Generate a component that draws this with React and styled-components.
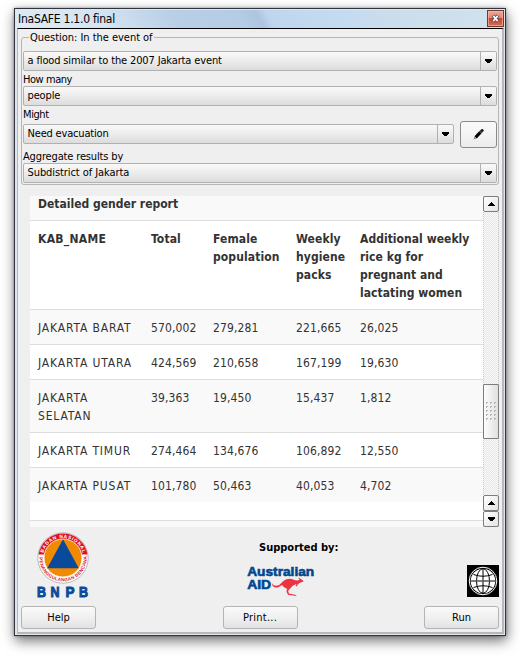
import React from "react";
import styled, { createGlobalStyle } from "styled-components";

const Global = createGlobalStyle`
  *, *::before, *::after { box-sizing: border-box; }
  body { margin: 0; background: #fff; overflow: hidden; }
`;

const Page = styled.div`
  width: 520px;
  height: 656px;
  padding: 8px 14px 20px;
  font: 11px/14px "DejaVu Sans Condensed", "DejaVu Sans", sans-serif;
  font-stretch: condensed;
  color: #000;
`;

const Window = styled.div`
  width: 492px;
  height: 628px;
  display: flex;
  flex-direction: column;
  border: 1px solid #30343c;
  background: #dfe6ee;
  padding: 1px;
  box-shadow: 1px 5px 12px 0 rgba(0, 0, 0, 0.55), 0 0 3px rgba(0, 0, 0, 0.35);
`;

const TitleBar = styled.div`
  height: 18px;
  flex: none;
  display: flex;
  justify-content: space-between;
  padding-left: 2px;
  background: linear-gradient(60deg, #dfe9f3 0, #d5e4f2 18%, #b9cfe6 33%, #b5cce5 46%, #adc5df 50%, #bfd6ee 52%, #c5dbf1 68%, #cbddeb 76%, #d2e2ee 100%);
`;

const Text = styled.span`
  display: block;
  white-space: nowrap;
  letter-spacing: ${(p) => p.$ls || 0}px;
  font-size: ${(p) => p.$size || 11}px;
  font-weight: ${(p) => (p.$bold ? 700 : 400)};
`;

const Title = styled(Text)`
  line-height: 18px;
`;

const CloseButton = styled.div`
  width: 17px;
  height: 17px;
  border: 1px solid #6b3a37;
  background: linear-gradient(#f0a795 0, #e08570 45%, #c64a30 50%, #d96a4c 100%);
  box-shadow: inset 0 0 0 1px rgba(255, 190, 170, 0.6);
  display: flex;
  align-items: center;
  justify-content: center;
`;

const Body = styled.div`
  flex: 1;
  margin-left: 1px;
  border: solid #bab7b9;
  border-width: 1px 2px 2px 1px;
  border-top-color: #000;
  background: #efefef;
  padding: 0 3px 0 3px;
  display: flex;
  flex-direction: column;
`;

const Group = styled.fieldset`
  margin: 1px 0 0;
  padding: 0 1px;
  height: 155px;
  min-width: 0;
  border: 1px solid #b5b5b5;
  border-radius: 3px;
  display: block;
`;

const Legend = styled.legend`
  margin-left: 6px;
  padding: 1px 1px 0;
  height: 14px;
`;

const Combo = styled.div`
  width: ${(p) => p.$w || 474}px;
  height: 20px;
  display: flex;
  align-items: stretch;
  justify-content: space-between;
  border: 1px solid #b1b1b1;
  border-radius: 2px;
  background: linear-gradient(#f9f9f9, #ececec 50%, #dcdcdc);
  padding-left: 3.5px;
`;

const ComboText = styled(Text)`
  line-height: 18px;
`;

const ComboArrow = styled.span`
  width: 16px;
  border-left: 1px solid #b1b1b1;
  display: flex;
  align-items: center;
  justify-content: center;
`;

const FieldLabel = styled(Text)`
  height: ${(p) => p.$h}px;
  line-height: 14px;
  padding-top: ${(p) => p.$top || 0}px;
`;

const FieldRow = styled.div`
  display: flex;
  align-items: center;
  justify-content: space-between;
  height: 26px;
  margin-top: -3px;
  margin-bottom: 1px;
`;

const IconButton = styled.div`
  width: 37px;
  height: 27px;
  border: 1px solid #8b8b8b;
  border-radius: 3px;
  background: linear-gradient(#fafafa, #ececec);
  display: flex;
  align-items: center;
  justify-content: center;
`;

const Report = styled.div`
  display: flex;
  height: 331px;
  margin: 11px 0 0 9px;
`;

const ReportView = styled.div`
  width: 453px;
  background: #fff;
  overflow: hidden;
`;

const Table = styled.table`
  width: 453px;
  table-layout: fixed;
  border-collapse: separate;
  border-spacing: 0;
  color: #333;
  font-size: 12px;
  line-height: 18px;
`;

const Col = styled.col`
  width: ${(p) => p.$w}px;
`;

const Row = styled.tr`
  background: ${(p) => (p.$odd ? "#f9f9f9" : "#fff")};
`;

const Cell = styled.td`
  padding: 9px 0 7px 8px;
  border-top: 1px solid #ddd;
  vertical-align: top;
  text-align: left;
`;

const Caption = styled.div`
  height: 24px;
  padding: 0 8px;
  background: #f9f9f9;
  color: #333;
  line-height: 16px;
`;

const NextTable = styled.div`
  margin-top: 18px;
  height: 7px;
  border-top: 1px solid #ddd;
  background: #f9f9f9;
`;

const ScrollBar = styled.div`
  width: 16px;
  display: flex;
  flex-direction: column;
  border: dotted #c9c9c9;
  border-width: 0 1px;
  background: repeating-conic-gradient(#e6e6e6 0 25%, #fafafa 0 50%) 0 0 / 2px 2px;
`;

const ScrollTrack = styled.div`
  height: ${(p) => p.$h}px;
`;

const ScrollButton = styled.div`
  width: 16px;
  margin-left: -1px;
  height: 16px;
  border: 1px solid #7d7d7d;
  border-radius: 2px;
  background: linear-gradient(135deg, #fff, #e3e3e3);
  display: flex;
  align-items: center;
  justify-content: center;
`;

const ScrollHandle = styled(ScrollButton)`
  height: 55px;
  border-radius: 1px;
  background: linear-gradient(90deg, #fdfdfd, #e0e0e0);
`;

const Sponsors = styled.div`
  height: 79px;
  display: flex;
  align-items: flex-end;
  padding: 0 0 9px 15px;
`;

const Support = styled.div`
  width: 110px;
  height: 56px;
  margin: 0 auto 0 169px;
  display: flex;
  flex-direction: column;
`;

const SupportLogo = styled.svg`
  margin: 9px 0 0 -13px;
`;

const Buttons = styled.div`
  display: flex;
  justify-content: space-between;
`;

const PushButton = styled.div`
  width: 75px;
  height: 23px;
  padding-top: 1px;
  border: 1px solid #b4b4b4;
  border-radius: 3px;
  background: linear-gradient(#fafafa, #f0f0f0 50%, #e2e2e2);
  display: flex;
  align-items: center;
  justify-content: center;
`;

const Arrow = ({ up }) => (
  <svg width="7" height="4" viewBox="0 0 7 4" shapeRendering="crispEdges">
    {up ? (
      <path d="M3 0h1v1h1v1h1v1h1v1H0V3h1V2h1V1h1z" />
    ) : (
      <path d="M0 0h7v2H6v1H5v1H2V3H1V2H0z" />
    )}
  </svg>
);

const Pencil = () => (
  <svg width="11" height="11" viewBox="0 0 11 11">
    <path d="M2.6 8.4 7.3 3.4" stroke="#000" strokeWidth="3" />
    <path d="M7.9 2.8 9.2 1.5" stroke="#222" strokeWidth="3" strokeLinecap="round" />
    <path d="M.4 10.6 1.4 7.6 3.5 9.5z" fill="#888" />
    <path d="M6.6 2.2 9 4.5" stroke="#999" strokeWidth=".6" />
  </svg>
);

const Grip = () => (
  <svg width="11" height="20" viewBox="0 0 11 20" shapeRendering="crispEdges">
    {[0, 4, 8, 12, 16].flatMap((y) =>
      [0, 4, 8].map((x) => (
        <path key={`${x}-${y}`} d={`M${x} ${y}h2v1h-1v1h-1z`} fill="#b4b4b4" />
      ))
    )}
  </svg>
);

const BnpbLogo = () => (
  <svg width="54" height="66" viewBox="0 0 54 66" overflow="visible">
    <defs>
      <path id="ringTop" d="M6.500 27.500 A20.500 20.500 0 1 1 47.500 27.500" />
      <path id="ringBottom" d="M3.400 23.500 A23.800 23.800 0 1 0 50.600 23.500" />
    </defs>
    <circle cx="27" cy="27" r="25.200" fill="#fff" stroke="#aaa" strokeWidth=".8" />
    <path d="M2.500 23.500 A24.800 24.800 0 0 1 51.500 23.500 H27z" fill="#e2121f" />
    <circle cx="27" cy="27" r="19" fill="#f08a00" stroke="#fff" strokeWidth=".8" />
    <path d="M27 8.300 42.800 37.300H11.200z" fill="#0a4a9c" />
    <text fontFamily="Liberation Sans" fontWeight="700" fontSize="4.800" fill="#fff">
      <textPath href="#ringTop" startOffset="5.500" textLength="53">BADAN NASIONAL</textPath>
    </text>
    <text fontFamily="Liberation Sans" fontWeight="700" fontSize="4.600" fill="#e2121f">
      <textPath href="#ringBottom" startOffset="3" textLength="76">PENANGGULANGAN BENCANA</textPath>
    </text>
    <g fontFamily="Liberation Sans" fontWeight="700" fontSize="15" fill="#0a4a9c" stroke="#0a4a9c" strokeWidth="1">
      {["B", "N", "P", "B"].map((c, i) => (
        <text key={i} x={[0.9, 14.6, 29.4, 43.1][i]} y="65.500" textLength="9" lengthAdjust="spacingAndGlyphs">{c}</text>
      ))}
    </g>
  </svg>
);

const AusAid = () => (
  <SupportLogo width="70" height="33" viewBox="0 0 70 33">
    <g fontFamily="Liberation Sans" fontWeight="700" fontSize="13" fill="#00478f" stroke="#00478f" strokeWidth=".6">
      <text x="1.200" y="12" textLength="67" lengthAdjust="spacingAndGlyphs">Australian</text>
      <text x="1.200" y="24.700" textLength="24" lengthAdjust="spacingAndGlyphs">AID</text>
    </g>
    <path fill="#ee3340" d="M26 19.2c1.5 3 5 3 7.500 1.500c3-2.500 5-6 10-6c3.500 0 5.500 2 8 1.800l2-.7-1.200-2.500 2.200 1.500 2.200 1.500 1 1.200-2.500.8c-1.500.5-2 1.200-3 1.700l-1.500 2.500-1-.4.8-2c-2 .6-2.700 1.400-4.300 2.200l-1.500 1.600c-1.500 1.500-2.800 3-2.500 3.600l.8 2 7 1.600.5.900-8.500-1.300-1.500-3 .5-3-3-1.500-2-2.200c-2 1.500-3.500 2.600-5.500 2.600c-2.200 0-4-1.200-4.500-3.400z" />
  </SupportLogo>
);

const Globe = () => (
  <svg width="32" height="32" viewBox="0 0 32 32">
    <rect width="32" height="32" fill="#000" />
    <circle cx="16" cy="16" r="13.800" fill="none" stroke="#fff" strokeWidth="1" />
    <circle cx="16" cy="16" r="12.300" fill="#fff" />
    <g fill="none" stroke="#000" strokeWidth="1">
      <ellipse cx="16" cy="16" rx="6.500" ry="12.300" />
      <path d="M16 3.500v25M6.500 9.500Q16 13 25.500 9.500M6.500 22.500Q16 19 25.500 22.500" />
      <path d="M3 16h26" stroke="#555" strokeWidth="1.500" />
    </g>
  </svg>
);

const HEAD = [
  ["KAB_NAME"],
  ["Total"],
  ["Female", "population"],
  ["Weekly", "hygiene", "packs"],
  ["Additional weekly", "rice kg for", "pregnant and", "lactating women"],
];
const ROWS = [
  [["JAKARTA BARAT"], "570,002", "279,281", "221,665", "26,025"],
  [["JAKARTA UTARA"], "424,569", "210,658", "167,199", "19,630"],
  [["JAKARTA", "SELATAN"], "39,363", "19,450", "15,437", "1,812"],
  [["JAKARTA TIMUR"], "274,464", "134,676", "106,892", "12,550"],
  [["JAKARTA PUSAT"], "101,780", "50,463", "40,053", "4,702"],
];

const Select = ({ children, w, ls = -0.14 }) => (
  <Combo $w={w}>
    <ComboText $ls={ls}>{children}</ComboText>
    <ComboArrow><Arrow /></ComboArrow>
  </Combo>
);

export default function App() {
  return (
    <Page>
      <Global />
      <Window>
        <TitleBar>
          <Title $size={12} $ls={-0.25}>InaSAFE 1.1.0 final</Title>
          <CloseButton>
            <svg width="9" height="9" viewBox="0 0 9 9">
              <path d="M2 1.500 7 7.500M7 1.500 2 7.500" stroke="#4d4b5e" strokeWidth="3.400" />
              <path d="M2.300 1.900 6.700 7.100M6.700 1.900 2.300 7.100" stroke="#fff" strokeWidth="1.700" />
            </svg>
          </CloseButton>
        </TitleBar>
        <Body>
          <Group>
            <Legend><Text $ls={-0.03}>Question: In the event of</Text></Legend>
            <FieldLabel $h={7} />
            <Select>a flood similar to the 2007 Jakarta event</Select>
            <FieldLabel $h={15} $top={2} $ls={-0.45}>How many</FieldLabel>
            <Select>people</Select>
            <FieldLabel $h={18} $top={2} $ls={-0.4}>Might</FieldLabel>
            <FieldRow>
              <Select w={431} ls={-0.18}>Need evacuation</Select>
              <IconButton><Pencil /></IconButton>
            </FieldRow>
            <FieldLabel $h={15} $top={2} $ls={-0.15}>Aggregate results by</FieldLabel>
            <Select ls={-0.08}>Subdistrict of Jakarta</Select>
          </Group>
          <Report>
            <ReportView>
              <Caption><Text $size={12} $bold>Detailed gender report</Text></Caption>
              <Table>
                <colgroup>
                  {[113, 62, 83, 64, 131].map((w, i) => <Col key={i} $w={w} />)}
                </colgroup>
                <tbody>
                  <Row>
                    {HEAD.map((lines, i) => (
                      <Cell as="th" key={lines[0]}>
                        {lines.map((l) => <Text key={l} $size={12} $bold $ls={i === 0 ? 0.28 : i === 4 ? 0.04 : 0.1}>{l}</Text>)}
                      </Cell>
                    ))}
                  </Row>
                  {ROWS.map(([name, ...nums], i) => (
                    <Row key={i} $odd={i % 2 === 0}>
                      <Cell>{name.map((l) => <Text key={l} $size={12} $ls={0.84}>{l}</Text>)}</Cell>
                      {nums.map((n) => <Cell key={n}><Text $size={12} $ls={0.12}>{n}</Text></Cell>)}
                    </Row>
                  ))}
                </tbody>
              </Table>
              <NextTable />
            </ReportView>
            <ScrollBar>
              <ScrollButton><Arrow up /></ScrollButton>
              <ScrollTrack $h={172} />
              <ScrollHandle><Grip /></ScrollHandle>
              <ScrollTrack $h={56} />
              <ScrollButton><Arrow up /></ScrollButton>
              <ScrollButton><Arrow /></ScrollButton>
            </ScrollBar>
          </Report>
          <Sponsors>
            <BnpbLogo />
            <Support>
              <Text $bold>Supported by:</Text>
              <AusAid />
            </Support>
            <Globe />
          </Sponsors>
          <Buttons>
            <PushButton><Text>Help</Text></PushButton>
            <PushButton><Text $ls={0.25}>Print...</Text></PushButton>
            <PushButton><Text>Run</Text></PushButton>
          </Buttons>
        </Body>
      </Window>
    </Page>
  );
}
